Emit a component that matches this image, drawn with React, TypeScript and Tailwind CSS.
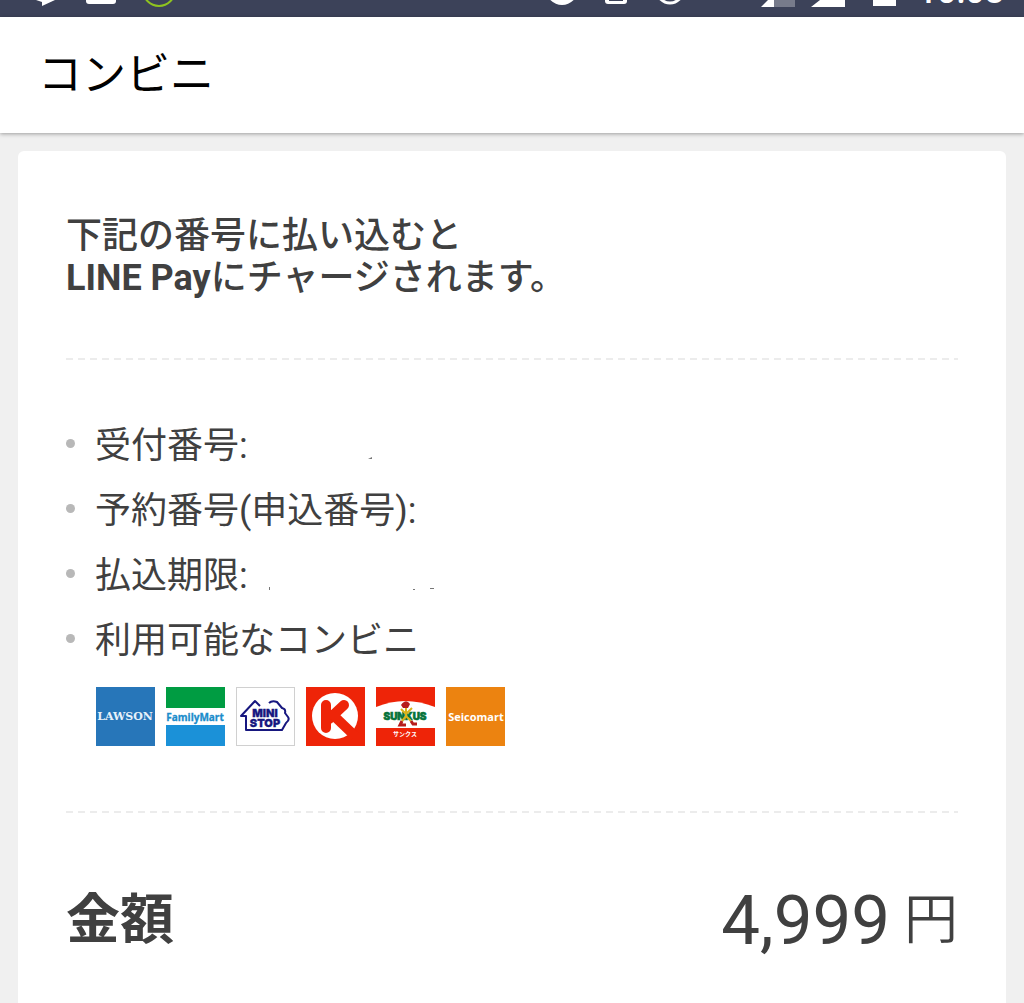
import React from 'react';

function StatusBar() {
    return (
        <div className="flex h-[17px] justify-between overflow-hidden bg-[#3c4259] text-white">
            <svg className="h-[17px] w-[190px]" viewBox="0 0 190 17" aria-hidden="true">
                <path d="M36 0H55L42 6V2L36 0Z" fill="white" />
                <path d="M86 0H116V1Q116 4 113 4H89Q86 4 86 1Z" fill="white" />
                <circle cx="159" cy="-10" r="16" fill="none" stroke="#8fc31f" strokeWidth="2" />
            </svg>
            <div className="flex">
                <svg className="h-[17px] w-[376px]" viewBox="0 0 376 17" aria-hidden="true">
                    <circle cx="38" cy="-11" r="16" fill="white" />
                    <path d="M81 0H103V1Q103 4 100 4H84Q81 4 81 1Z" fill="white" />
                    <path d="M85 0H99V1H85Z" fill="#3c4259" />
                    <circle cx="146" cy="-10" r="13" fill="none" stroke="white" strokeWidth="3" />
                    <path d="M237 7L250 -6V7Z" fill="white" />
                    <path d="M250 0H271V7H250Z" fill="#777b8b" />
                    <path d="M287 7L296 0H321V7Z" fill="white" />
                    <path d="M349 0H372V6H349Z" fill="white" />
                </svg>
                <div className="-mt-[30px] pr-5 pl-[18px] text-[34px] leading-[42px] font-medium">10:08</div>
            </div>
        </div>
    );
}

function Lawson() {
    return (
        <svg className="size-[59px]" viewBox="0 0 59 59" role="img" aria-label="LAWSON">
            <rect width="59" height="59" fill="#2776b9" />
            <text x="29" y="33" textAnchor="middle" fontFamily="DejaVu Serif" fontSize="11" fontWeight="700" fill="#e6f1fa">LAWSON</text>
        </svg>
    );
}

function FamilyMart() {
    return (
        <svg className="size-[59px]" viewBox="0 0 59 59" role="img" aria-label="FamilyMart">
            <rect width="59" height="59" fill="white" />
            <rect width="59" height="21" fill="#009c42" />
            <rect y="38" width="59" height="21" fill="#1b91d8" />
            <text x="29" y="34" textAnchor="middle" fontFamily="Open Sans" fontSize="10" fontWeight="700" fill="#1b8ccb" stroke="#1b8ccb" strokeWidth="0.3">FamilyMart</text>
        </svg>
    );
}

function MiniStop() {
    return (
        <svg className="size-[59px]" viewBox="0 0 59 59" role="img" aria-label="MINI STOP">
            <rect x="0.5" y="0.5" width="58" height="58" fill="white" stroke="#d0d0d0" />
            <path
                d="M33 16Q36 13 41 15L46 21Q50 22 49 26L52 30Q54 33 50 36L46 43H10V29H5L19 14L24 19"
                fill="none"
                stroke="#17177f"
                strokeWidth="2"
                strokeLinejoin="round"
            />
            <text x="29" y="30" textAnchor="middle" fontFamily="Inter" fontSize="11" fontWeight="900" fill="#17177f" stroke="#17177f" strokeWidth="0.3">MINI</text>
            <text x="29" y="40" textAnchor="middle" fontFamily="Inter" fontSize="11" fontWeight="900" fill="#17177f" stroke="#17177f" strokeWidth="0.3">STOP</text>
        </svg>
    );
}

function CircleK() {
    return (
        <svg className="size-[59px]" viewBox="0 0 59 59" role="img" aria-label="Circle K">
            <rect width="59" height="59" fill="#ee2408" />
            <circle cx="29" cy="29" r="23" fill="white" />
            <path d="M20 18V41M38 18L23 32" fill="none" stroke="#ee2408" strokeWidth="10" strokeLinecap="round" />
            <path d="M27 28L49 49" fill="none" stroke="#ee2408" strokeWidth="10" />
        </svg>
    );
}

function Sunkus() {
    return (
        <svg className="size-[59px]" viewBox="0 0 59 59" role="img" aria-label="サンクス">
            <rect width="59" height="59" fill="#ee2408" />
            <path d="M0 20Q29 8 59 20V41H0Z" fill="white" />
            <text x="29" y="33" textAnchor="middle" fontFamily="Inter" fontSize="10" fontWeight="900" fill="#08733b" stroke="#08733b" strokeWidth="0.6">SUNKUS</text>
            <path d="M25 22L30 27L36 21M30 20V29L35 34M31 28L26 34" fill="none" stroke="#d9b31c" strokeWidth="2" />
            <path d="M25 18Q30 11 34 17L32 21H27Z" fill="#b61d1d" />
            <path d="M26 34L24 38H30M35 34L37 37H41" fill="none" stroke="#b61d1d" strokeWidth="3" />
            <text x="29" y="49" textAnchor="middle" fontFamily="Noto Sans CJK JP" fontSize="6" fontWeight="700" fill="white">サンクス</text>
        </svg>
    );
}

function Seicomart() {
    return (
        <svg className="size-[59px]" viewBox="0 0 59 59" role="img" aria-label="Seicomart">
            <rect width="59" height="59" fill="#ec8310" />
            <text x="30" y="34" textAnchor="middle" fontFamily="Open Sans" fontSize="11" fontWeight="700" fill="white">Seicomart</text>
        </svg>
    );
}

function Divider() {
    return (
        <svg className="block h-[2px] w-full" aria-hidden="true">
            <line x1="0" y1="1" x2="100%" y2="1" stroke="#ececec" strokeWidth="2" strokeDasharray="7 5" />
        </svg>
    );
}

const stores = [Lawson, FamilyMart, MiniStop, CircleK, Sunkus, Seicomart];

// marks: what is left visible of the hidden values
const details = [
    { label: '受付番号:', marks: 'M100 26L104 24V26Z' },
    { label: '予約番号(申込番号):' },
    { label: '払込期限:', marks: 'M1 24H2V27H1ZM145 26H147V27H145ZM162 25H166V26H162Z' },
    { label: '利用可能なコンビニ' },
];

export default function App() {
    return (
        <div
            lang="ja"
            className="flex min-h-screen flex-col bg-[#f0f0f0] font-[Roboto,'Noto_Sans_CJK_JP',sans-serif] text-[#404040]"
        >
            <StatusBar />
            <header className="z-10 bg-white px-[38px] py-7 shadow-[0_1px_4px_rgba(0,0,0,0.35)]">
                <h1 className="text-[44px] leading-[60px] text-black">コンビニ</h1>
            </header>

            <main className="mx-[18px] mt-[18px] grow rounded-t-md bg-white px-12">
                <p className="pt-16 pb-[59px] text-[36px] leading-[42px] font-medium">
                    下記の番号に払い込むと
                    <br />
                    <span className="font-bold">LINE Pay</span>にチャージされます。
                </p>
                <Divider />

                <ul className="pt-[54px] text-[36px] leading-[65px]">
                    {details.map(({ label, marks }) => (
                        <li key={label} className="flex items-center gap-5">
                            <span className="mb-1.5 size-[9px] rounded-full bg-[#b8b8b8]" />
                            {label}
                            {marks && (
                                <svg className="h-[27px] w-[170px]" viewBox="0 0 170 27" aria-hidden="true">
                                    <path d={marks} fill="#777777" />
                                </svg>
                            )}
                        </li>
                    ))}
                </ul>
                <div className="flex gap-[11px] pt-[13px] pb-[65px] pl-[30px]">
                    {stores.map((Store) => (
                        <Store key={Store.name} />
                    ))}
                </div>
                <Divider />

                <dl className="flex items-center justify-between pt-[66px]">
                    <dt className="text-[54px] leading-[80px] font-bold">金額</dt>
                    <dd className="flex items-center gap-3.5">
                        <span className="text-[69px] leading-[84px]">4,999</span>
                        <span className="text-[54px] leading-[80px] font-[350]">円</span>
                    </dd>
                </dl>
            </main>
        </div>
    );
}
